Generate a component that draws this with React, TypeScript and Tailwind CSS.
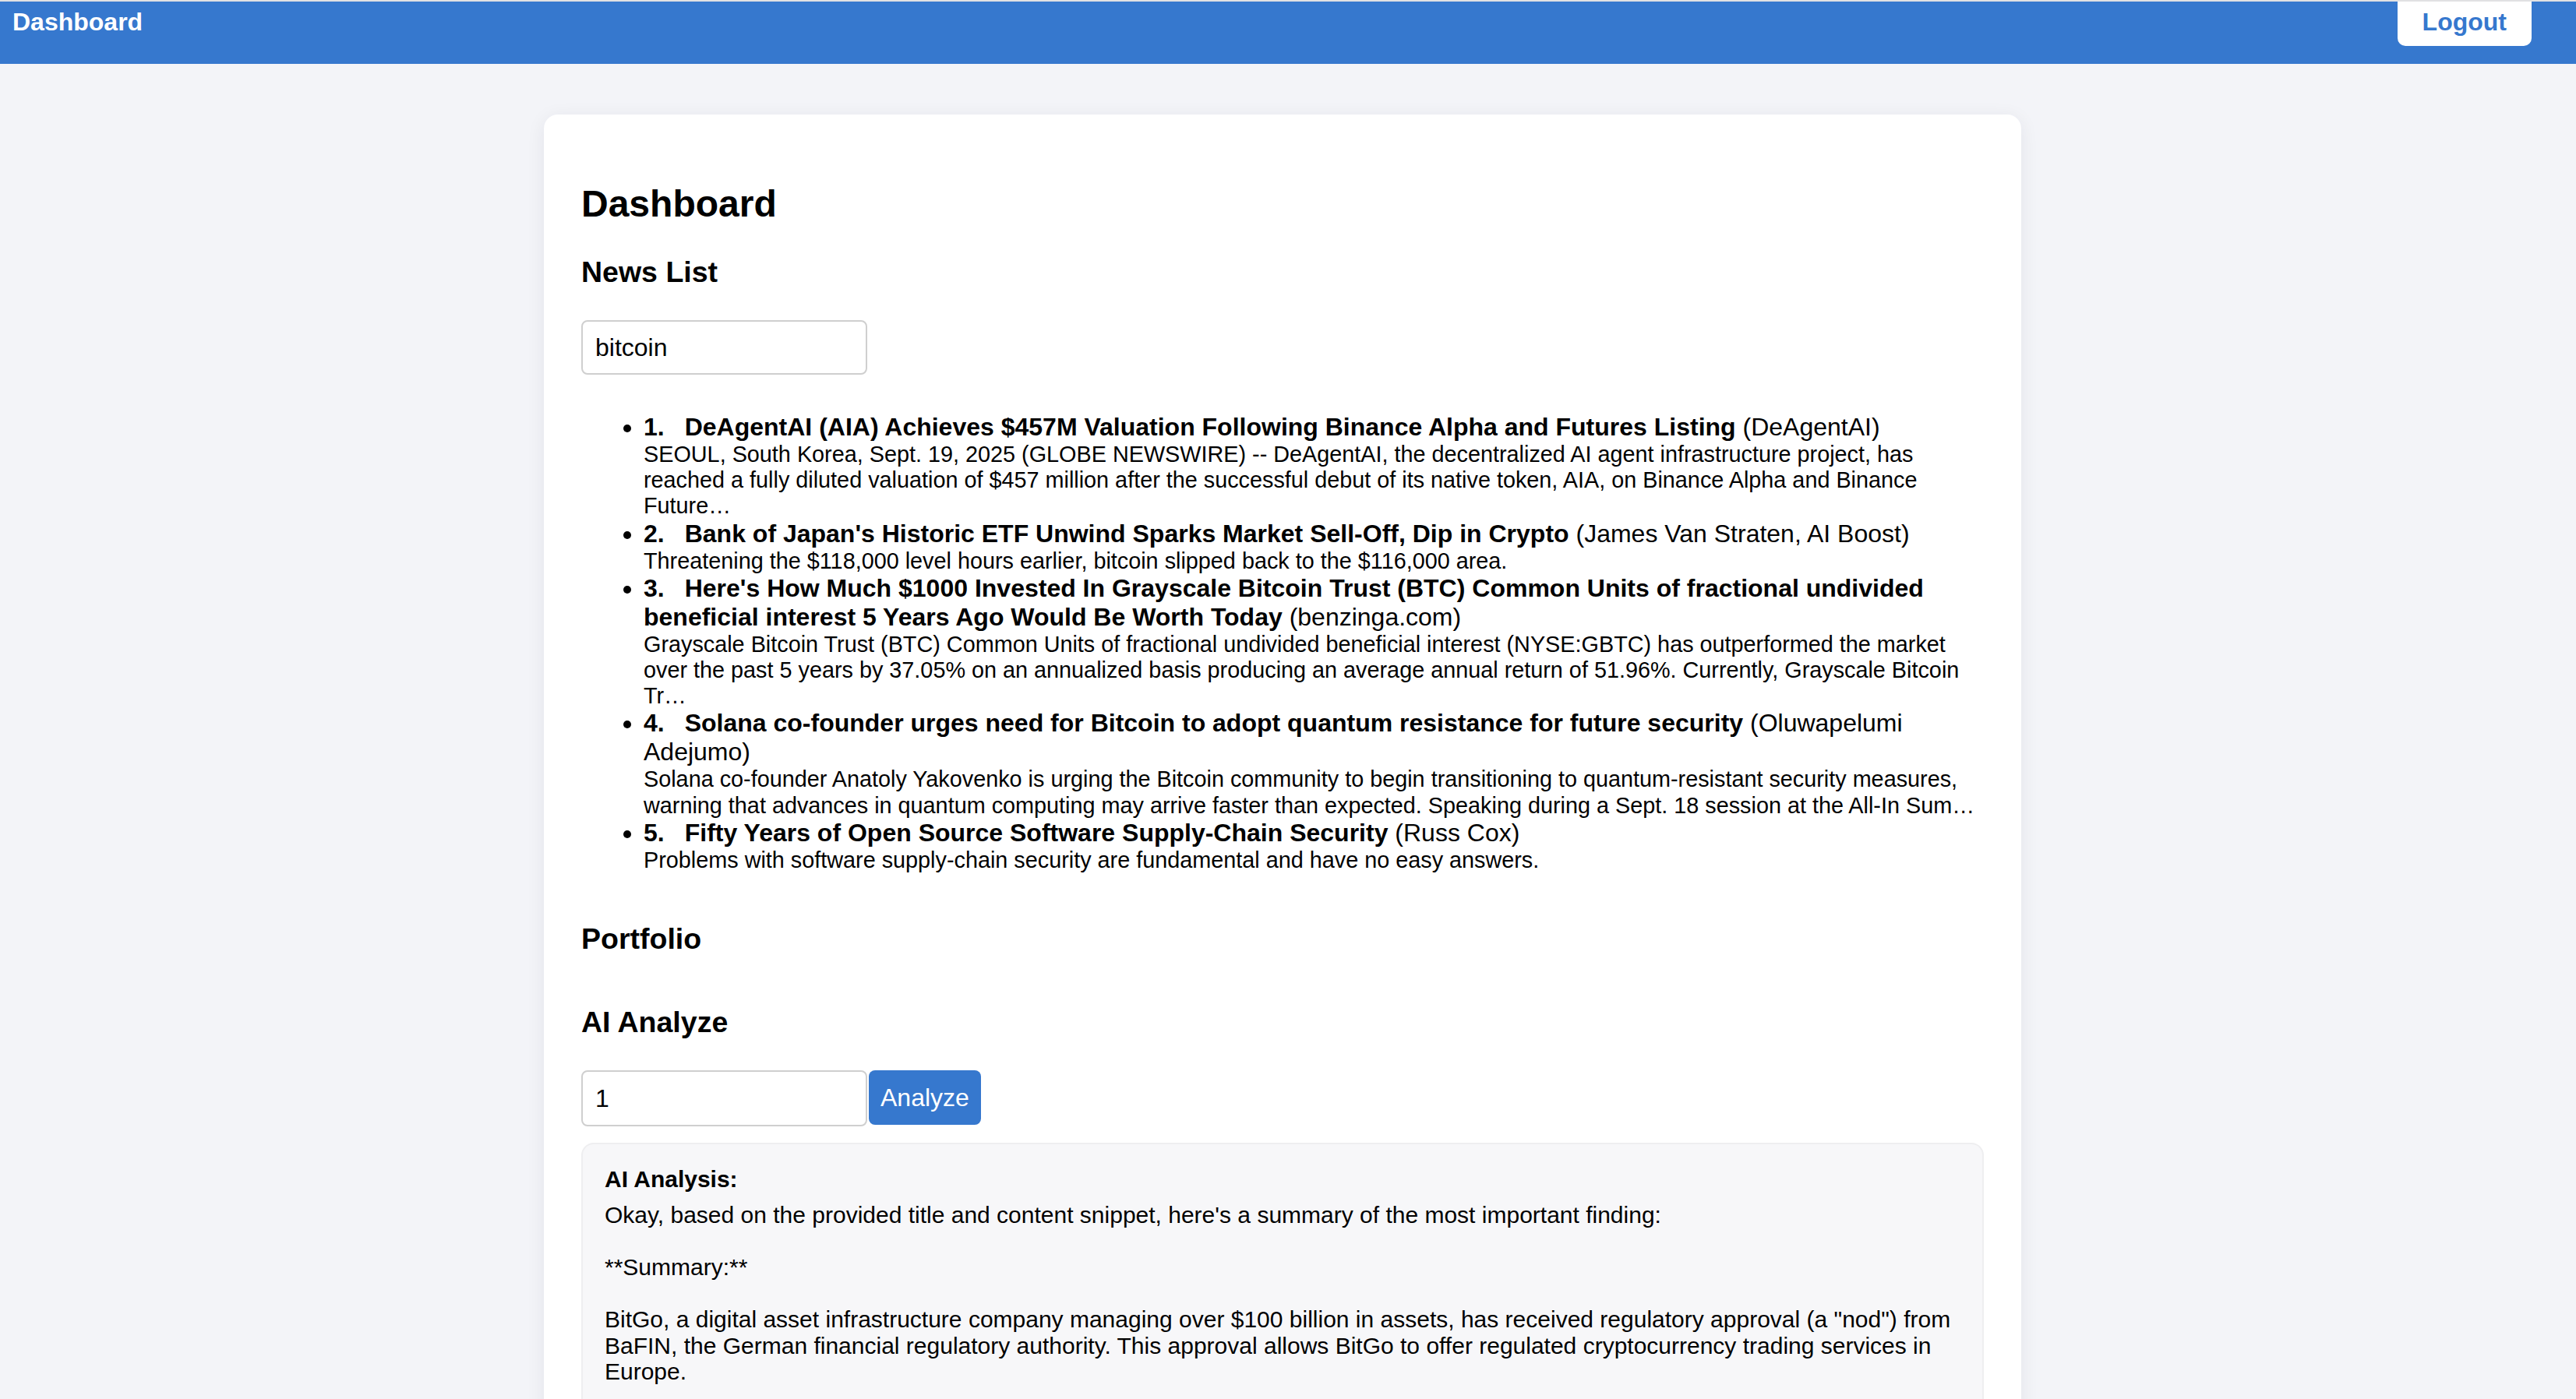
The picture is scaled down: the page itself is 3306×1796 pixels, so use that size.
import React from "react";

const news = [
  {
    title: "DeAgentAI (AIA) Achieves $457M Valuation Following Binance Alpha and Futures Listing",
    source: "DeAgentAI",
    desc: "SEOUL, South Korea, Sept. 19, 2025 (GLOBE NEWSWIRE) -- DeAgentAI, the decentralized AI agent infrastructure project, has reached a fully diluted valuation of $457 million after the successful debut of its native token, AIA, on Binance Alpha and Binance Future…",
  },
  {
    title: "Bank of Japan's Historic ETF Unwind Sparks Market Sell-Off, Dip in Crypto",
    source: "James Van Straten, AI Boost",
    desc: "Threatening the $118,000 level hours earlier, bitcoin slipped back to the $116,000 area.",
  },
  {
    title: "Here's How Much $1000 Invested In Grayscale Bitcoin Trust (BTC) Common Units of fractional undivided beneficial interest 5 Years Ago Would Be Worth Today",
    source: "benzinga.com",
    desc: "Grayscale Bitcoin Trust (BTC) Common Units of fractional undivided beneficial interest (NYSE:GBTC) has outperformed the market over the past 5 years by 37.05% on an annualized basis producing an average annual return of 51.96%. Currently, Grayscale Bitcoin Tr…",
  },
  {
    title: "Solana co-founder urges need for Bitcoin to adopt quantum resistance for future security",
    source: "Oluwapelumi Adejumo",
    desc: "Solana co-founder Anatoly Yakovenko is urging the Bitcoin community to begin transitioning to quantum-resistant security measures, warning that advances in quantum computing may arrive faster than expected. Speaking during a Sept. 18 session at the All-In Sum…",
  },
  {
    title: "Fifty Years of Open Source Software Supply-Chain Security",
    source: "Russ Cox",
    desc: "Problems with software supply-chain security are fundamental and have no easy answers.",
  },
];

const analysis = `Okay, based on the provided title and content snippet, here's a summary of the most important finding:

**Summary:**

BitGo, a digital asset infrastructure company managing over $100 billion in assets, has received regulatory approval (a "nod") from BaFIN, the German financial regulatory authority. This approval allows BitGo to offer regulated cryptocurrency trading services in Europe.

**Why it's important:**`;

export default function App() {
  return (
    <div className="h-[1796px] overflow-hidden bg-[#f3f4f8] font-['Liberation_Sans',Arial,sans-serif] text-black">
      <div className="h-[2px] bg-[#e1e1e3]" />
      <header className="flex h-[80px] items-start justify-between bg-[#3678ce] pl-[16px] pr-[57px]">
        <div className="pt-[8px] text-[32px] font-bold leading-[37px] text-white">Dashboard</div>
        <button className="rounded-b-[10px] bg-white px-[32px] pt-[8px] pb-[12px] text-[32px] font-bold leading-[37px] text-[#3678ce]">
          Logout
        </button>
      </header>

      <div className="pr-[14px]">
        <main className="mx-auto mt-[65px] w-[1896px] rounded-[18px] bg-white px-[48px] pt-[48px] pb-[48px] shadow-[0_4px_24px_rgba(20,30,60,0.07)]">
          <h1 className="mt-[39px] text-[48px] font-bold leading-[56px]">Dashboard</h1>
          <h3 className="mt-[38px] text-[37.5px] font-bold leading-[43px]">News List</h3>
          <input
            readOnly
            value="bitcoin"
            className="mt-[40px] block h-[70px] w-[367px] rounded-[8px] border-2 border-[#cfcfcf] bg-white px-[16px] text-[32px] text-black outline-none"
          />

          <ul className="mt-[49px] list-disc pl-[80px]">
            {news.map((n, i) => (
              <li key={i} className="text-[32px] leading-[37px]">
                <b>{i + 1}.</b>
                <span className="inline-block w-[26px]" />
                <b>{n.title}</b> ({n.source})
                <div className="text-[28.8px] leading-[33.2px]">{n.desc}</div>
              </li>
            ))}
          </ul>

          <h3 className="mt-[63px] text-[37.5px] font-bold leading-[43px]">Portfolio</h3>
          <h3 className="mt-[64px] text-[37.5px] font-bold leading-[43px]">AI Analyze</h3>

          <div className="mt-[40px] flex items-start gap-[2px]">
            <input
              readOnly
              value="1"
              className="block h-[72px] w-[367px] rounded-[8px] border-2 border-[#cfcfcf] bg-white px-[16px] text-[32px] text-black outline-none"
            />
            <button className="h-[70px] rounded-[8px] bg-[#3678ce] px-[15px] text-[32px] leading-[37px] text-white">
              Analyze
            </button>
          </div>

          <div className="mt-[21px] rounded-[16px] border-2 border-[#eeeef0] bg-[#f7f7f9] px-[28px] pt-[28px] pb-[28px]">
            <div className="text-[30px] font-bold leading-[34px]">AI Analysis:</div>
            <div className="mt-[12px] whitespace-pre-wrap text-[30px] leading-[33.5px]">{analysis}</div>
          </div>
        </main>
      </div>
    </div>
  );
}
